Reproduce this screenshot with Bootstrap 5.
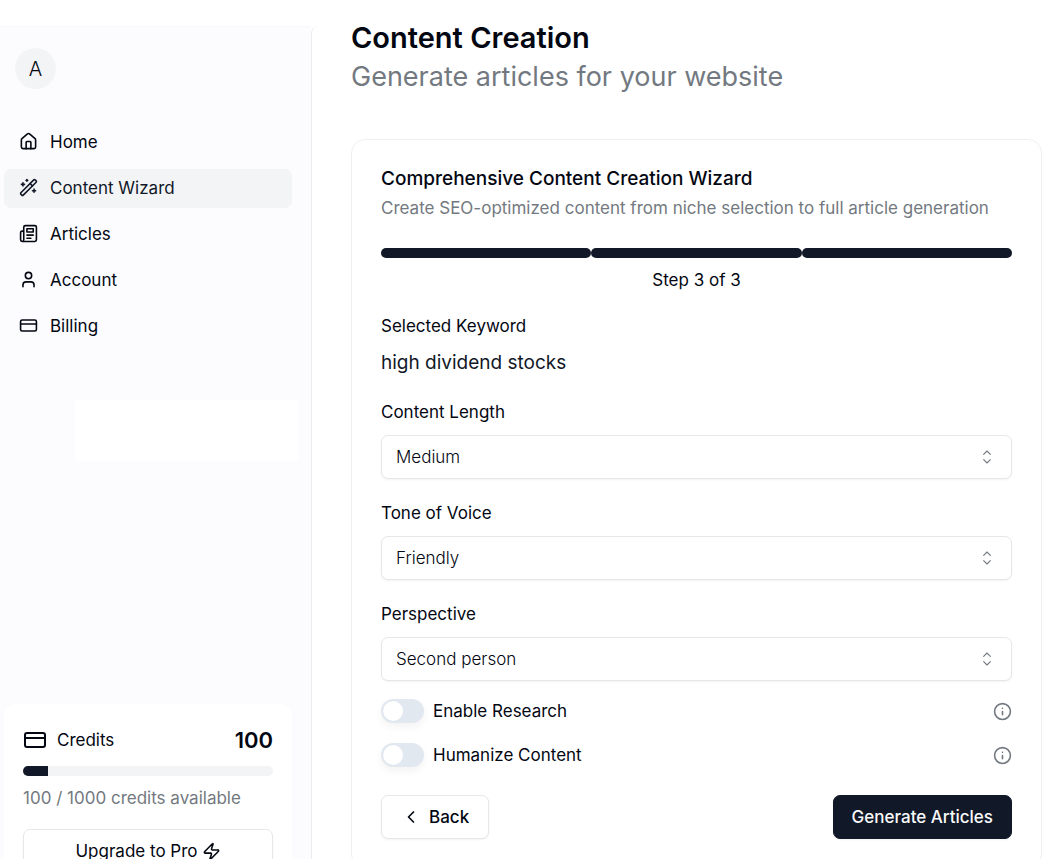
<!DOCTYPE html>
<html lang="en">
<head>
<meta charset="utf-8">
<meta name="viewport" content="width=device-width, initial-scale=1">
<title>Content Creation</title>
<link href="https://cdn.jsdelivr.net/npm/bootstrap@5.3.0/dist/css/bootstrap.min.css" rel="stylesheet">
<style>
  :root { --ink: #030712; --navy: #111827; --muted: #737980; --line: #e5e7eb; --soft: #f3f4f6; }
  html { scrollbar-width: none; }
  body { font-family: Inter, "Liberation Sans", sans-serif; font-size: 17px; line-height: 24px; color: var(--ink); background: #fff; padding-top: 26px; }
  svg { fill: none; stroke: currentColor; stroke-width: 2; stroke-linecap: round; stroke-linejoin: round; flex: none; }
  .side { width: 311px; background: #fcfcfe; border-top: 1px solid #f8f8fa; padding: 21px 19px 0 4px; }
  .avatar { width: 41px; height: 41px; margin-left: 11px; background: var(--soft); font-size: 20px; font-weight: 300; }
  .menu { margin-top: 34px; gap: 7px; }
  .menu .nav-link { height: 39px; padding: 0 15px 2px; gap: 12px; color: var(--ink); border-radius: 7px; }
  .menu .nav-link.active { background: var(--soft); color: var(--navy); }
  .blank-slot { height: 61px; margin: 54px -6px 0 71px; background: #fff; border-radius: 4px; }
  .credits { border-radius: 12px; background: #fff; padding: 24px 19px 12px; }
  .credits-icon { margin-right: 10px; }
  .credit-total { font-size: 22px; font-weight: 600; }
  .meter { --bs-progress-height: 10px; --bs-progress-bg: var(--soft); --bs-progress-bar-bg: var(--navy); --bs-progress-border-radius: 5px; margin: 14px 0 10px; }
  .muted { color: var(--muted); }
  .credit-note { margin-bottom: 19px; }
  .btn-line, .btn-navy { height: 44px; font-size: 17px; line-height: 24px; border-radius: 7px; box-shadow: 0 1px 2px rgba(0,0,0,.05); }
  .btn-line { --bs-btn-color: var(--ink); --bs-btn-bg: #fff; --bs-btn-border-color: var(--line); --bs-btn-hover-bg: var(--soft); --bs-btn-hover-border-color: var(--line); padding: 0 19px; }
  .btn-navy { --bs-btn-color: #f9fafb; --bs-btn-bg: var(--navy); --bs-btn-border-color: var(--navy); --bs-btn-hover-color: #fff; --bs-btn-hover-bg: #1f2937; padding: 0 18px; }
  .actions .btn { font-weight: 500; }
  .content { border-left: 1px solid #ececef; border-top-left-radius: 8px; padding: 0 7px 16px 39px; min-width: 0; }
  .page-title { font-size: 29px; line-height: 24px; font-weight: 600; margin-bottom: 8px; }
  .page-sub { font-size: 27px; line-height: 38px; margin-bottom: 43px; }
  .wizard { border: 1px solid #eeeff1; border-radius: 14px; padding: 27px 29px 28px; }
  .wizard-title { font-size: 19px; line-height: 24px; font-weight: 500; margin-bottom: 5px; }
  .steps { margin: 28px 0 10px; }
  .steps span { height: 10px; border-radius: 5px; background: var(--navy); }
  .step-count { margin-bottom: 22px; }
  .field-label { display: block; margin-bottom: 11px; }
  .keyword { font-size: 19px; line-height: 28px; margin-bottom: 23px; color: var(--navy); }
  .field { margin-bottom: 22px; }
  .picker { height: 44px; font-size: 17px; line-height: 24px; font-weight: 300; color: var(--ink); padding: 0 48px 0 14px; border: 1px solid var(--line); border-radius: 7px; background-size: 16px 16px; background-position: right 16px center; box-shadow: 0 1px 2px rgba(0,0,0,.05);
    background-image: url("data:image/svg+xml,%3Csvg xmlns='http://www.w3.org/2000/svg' viewBox='0 0 24 24' fill='none' stroke='%23767a82' stroke-width='1.7' stroke-linecap='round' stroke-linejoin='round'%3E%3Cpath d='m7 16 5 5 5-5M7 8l5-5 5 5'/%3E%3C/svg%3E"); }
  .toggles { gap: 20px; margin-top: -4px; }
  .toggles label { margin-left: 9px; }
  .toggle-box.form-check-input { width: 43px; height: 24px; margin: 0; border: 2px solid #e2e8f0; background-color: #e2e8f0; background-size: 20px 20px; background-position: left center; box-shadow: 0 4px 8px rgba(0,0,0,.05);
    background-image: url("data:image/svg+xml,%3Csvg xmlns='http://www.w3.org/2000/svg' viewBox='0 0 20 20'%3E%3Ccircle cx='10' cy='10' r='10' fill='%23fff'/%3E%3C/svg%3E"); }
  .toggle-box.form-check-input:checked { background-color: var(--navy); border-color: var(--navy); background-position: right center; }
  .actions { margin-top: 28px; }
  @media (max-width: 767px) { .side { width: 100%; } .content { padding-left: 16px; } }
</style>
</head>
<body>
<div class="d-md-flex align-items-stretch">
  <aside class="side d-flex flex-column flex-shrink-0 min-vh-100">
    <div class="avatar rounded-circle d-flex align-items-center justify-content-center">A</div>
    <nav class="menu nav flex-column" aria-label="Main">
      <a class="nav-link d-flex align-items-center" href="#"><svg width="19" height="19" viewBox="0 0 24 24"><path d="M15 21v-8a1 1 0 0 0-1-1h-4a1 1 0 0 0-1 1v8"/><path d="M3 10a2 2 0 0 1 .709-1.528l7-5.999a2 2 0 0 1 2.582 0l7 5.999A2 2 0 0 1 21 10v9a2 2 0 0 1-2 2H5a2 2 0 0 1-2-2z"/></svg>Home</a>
      <a class="nav-link active d-flex align-items-center" href="#" aria-current="page"><svg width="19" height="19" viewBox="0 0 24 24"><path d="m21.64 3.64-1.28-1.28a1.21 1.21 0 0 0-1.72 0L2.36 18.64a1.21 1.21 0 0 0 0 1.72l1.28 1.28a1.2 1.2 0 0 0 1.72 0L21.64 5.36a1.2 1.2 0 0 0 0-1.72"/><path d="m14 7 3 3M5 6v4M19 14v4M10 2v2M7 8H3M21 16h-4M11 3H9"/></svg>Content Wizard</a>
      <a class="nav-link d-flex align-items-center" href="#"><svg width="19" height="19" viewBox="0 0 24 24"><path d="M4 22h16a2 2 0 0 0 2-2V4a2 2 0 0 0-2-2H8a2 2 0 0 0-2 2v16a2 2 0 0 1-2 2Zm0 0a2 2 0 0 1-2-2v-9c0-1.100.9-2 2-2h2"/><path d="M18 14h-8M15 18h-5M10 6h8v4h-8z"/></svg>Articles</a>
      <a class="nav-link d-flex align-items-center" href="#"><svg width="19" height="19" viewBox="0 0 24 24"><path d="M19 21v-2a4 4 0 0 0-4-4H9a4 4 0 0 0-4 4v2"/><circle cx="12" cy="7" r="4"/></svg>Account</a>
      <a class="nav-link d-flex align-items-center" href="#"><svg width="19" height="19" viewBox="0 0 24 24"><rect x="2" y="5" width="20" height="14" rx="2"/><path d="M2 10h20"/></svg>Billing</a>
    </nav>
    <div class="blank-slot"></div>
    <section class="credits mt-auto">
      <div class="d-flex align-items-center">
        <svg class="credits-icon" width="24" height="24" viewBox="0 0 24 24"><rect x="2" y="5" width="20" height="14" rx="2"/><path d="M2 10h20"/></svg>
        <span>Credits</span>
        <span class="credit-total ms-auto">100</span>
      </div>
      <div class="meter progress" role="progressbar" aria-label="Credits" aria-valuenow="100" aria-valuemin="0" aria-valuemax="1000"><div class="progress-bar" style="width:10%"></div></div>
      <p class="muted credit-note">100 / 1000 credits available</p>
      <button type="button" class="btn btn-line w-100 d-flex align-items-center justify-content-center">Upgrade to Pro<svg class="ms-1" width="19" height="19" viewBox="0 0 24 24"><path d="M4 14a1 1 0 0 1-.78-1.630l9.900-10.200a.5.5 0 0 1 .86.460l-1.920 6.020A1 1 0 0 0 13 10h7a1 1 0 0 1 .78 1.630l-9.900 10.200a.5.5 0 0 1-.86-.460l1.920-6.020A1 1 0 0 0 11 14z"/></svg></button>
    </section>
  </aside>

  <main class="content flex-grow-1">
    <h1 class="page-title">Content Creation</h1>
    <p class="page-sub muted">Generate articles for your website</p>
    <form class="wizard">
      <h2 class="wizard-title">Comprehensive Content Creation Wizard</h2>
      <p class="muted mb-0">Create SEO-optimized content from niche selection to full article generation</p>
      <div class="steps d-flex"><span class="flex-fill"></span><span class="flex-fill"></span><span class="flex-fill"></span></div>
      <p class="step-count text-center">Step 3 of 3</p>
      <div class="field-label">Selected Keyword</div>
      <p class="keyword">high dividend stocks</p>
      <div class="field">
        <label class="field-label" for="length">Content Length</label>
        <select class="form-select picker" id="length"><option>Short</option><option selected>Medium</option><option>Long</option></select>
      </div>
      <div class="field">
        <label class="field-label" for="tone">Tone of Voice</label>
        <select class="form-select picker" id="tone"><option selected>Friendly</option><option>Formal</option></select>
      </div>
      <div class="field">
        <label class="field-label" for="person">Perspective</label>
        <select class="form-select picker" id="person"><option>First person</option><option selected>Second person</option><option>Third person</option></select>
      </div>
      <div class="toggles d-flex flex-column">
        <div class="form-switch d-flex align-items-center p-0">
          <input class="form-check-input toggle-box" type="checkbox" role="switch" id="research">
          <label class="me-auto" for="research">Enable Research</label>
          <button type="button" class="btn p-0 border-0 d-flex muted" aria-label="About research"><svg width="19" height="19" viewBox="0 0 24 24"><circle cx="12" cy="12" r="10"/><path d="M12 16v-4M12 8h.01"/></svg></button>
        </div>
        <div class="form-switch d-flex align-items-center p-0">
          <input class="form-check-input toggle-box" type="checkbox" role="switch" id="humanize">
          <label class="me-auto" for="humanize">Humanize Content</label>
          <button type="button" class="btn p-0 border-0 d-flex muted" aria-label="About humanizing"><svg width="19" height="19" viewBox="0 0 24 24"><circle cx="12" cy="12" r="10"/><path d="M12 16v-4M12 8h.01"/></svg></button>
        </div>
      </div>
      <div class="actions d-flex justify-content-between">
        <button type="button" class="btn btn-line d-flex align-items-center"><svg class="me-2" width="20" height="20" viewBox="0 0 24 24"><path d="m15 18-6-6 6-6"/></svg>Back</button>
        <button type="submit" class="btn btn-navy">Generate Articles</button>
      </div>
    </form>
  </main>
</div>
<script src="https://cdn.jsdelivr.net/npm/bootstrap@5.3.0/dist/js/bootstrap.bundle.min.js"></script>
</body>
</html>
